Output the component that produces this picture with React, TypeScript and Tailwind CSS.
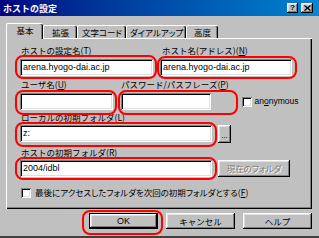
import type { ReactNode } from 'react';

const raised =
  'shadow-[inset_-1px_-1px_0_#000,inset_1px_1px_0_#fff,inset_-2px_-2px_0_#808080,inset_2px_2px_0_#dfdfdf]';
const sunken =
  'shadow-[inset_1px_1px_0_#808080,inset_-1px_-1px_0_#fff,inset_2px_2px_0_#000,inset_-2px_-2px_0_#dfdfdf]';

function U({ children }: { children: ReactNode }) {
  return <span className="underline underline-offset-[1px]">{children}</span>;
}

// red annotation ring drawn over a control
function Mark({ className }: { className: string }) {
  return <span className={`pointer-events-none absolute rounded-[8px] border-2 border-[#f00] ${className}`} />;
}

function Input({ width, value }: { width: string; value?: string }) {
  return (
    <div
      className={`${width} h-[17px] bg-white ${sunken} flex items-center px-[3px] font-['Liberation_Sans',sans-serif] text-[9px] leading-none`}
    >
      {value}
    </div>
  );
}

function Check() {
  return <div className={`w-[10px] h-[10px] bg-white ${sunken}`} />;
}

function Tab({ children, width, active }: { children: ReactNode; width: string; active?: boolean }) {
  if (active) {
    return (
      <div
        className={`relative z-10 -mb-px h-[16px] ${width} bg-[#c0c0c0] rounded-t-[2px] border-l border-t border-white shadow-[inset_-1px_0_0_#000,inset_-2px_0_0_#808080] flex items-center justify-center pb-[2px]`}
      >
        {children}
      </div>
    );
  }
  return (
    <div
      className={`h-[13px] ${width} rounded-t-[2px] border-l border-t border-white shadow-[inset_-1px_0_0_#000,inset_-2px_0_0_#808080] flex items-center justify-center [font-feature-settings:'palt']`}
    >
      {children}
    </div>
  );
}

export default function App() {
  return (
    <div className="w-[319px] h-[238px] overflow-hidden bg-[#c0c0c0] border-b-2 border-b-[#404040] flex flex-col font-['Noto_Sans_CJK_JP',sans-serif] text-[8.5px] leading-[11px] text-black">
      {/* title bar */}
      <div className="h-[16px] shrink-0 flex items-center justify-between pl-[3px] pr-[6px] bg-linear-to-r from-[#000080] to-[#1084d0]">
        <span className="text-white font-bold text-[9px]">ホストの設定</span>
        <div className="flex gap-[3px]">
          <div className={`w-[11px] h-[10px] bg-[#c0c0c0] ${raised} flex items-center justify-center font-['Liberation_Sans',sans-serif] font-bold text-[8px] leading-none`}>
            ?
          </div>
          <div className={`w-[12px] h-[10px] bg-[#c0c0c0] ${raised} flex items-center justify-center`}>
            <svg width="7" height="6" viewBox="0 0 7 6">
              <path d="M0.5 0.5L6.5 5.5M6.5 0.5L0.5 5.5" stroke="#000" strokeWidth="1.4" />
            </svg>
          </div>
        </div>
      </div>

      {/* tabs */}
      <div className="mt-[7px] h-[15px] shrink-0 flex items-end pl-[6px]">
        <Tab width="w-[37px]" active>
          基本
        </Tab>
        <Tab width="w-[34px]">拡張</Tab>
        <Tab width="w-[49px]">文字コード</Tab>
        <Tab width="w-[60px]">ダイアルアップ</Tab>
        <Tab width="w-[32px]">高度</Tab>
      </div>

      {/* tab page */}
      <div className="ml-[6px] w-[306px] h-[171px] shrink-0 border-t border-l border-white shadow-[inset_-1px_-1px_0_#000,inset_-2px_-2px_0_#808080] pl-[13px] pt-[6px] flex flex-col">
        <div className="flex gap-[7px]">
          <div className="flex flex-col">
            <span className="pl-[1px] h-[11px]">
              ホストの設定名(<U>T</U>)
            </span>
            <div className="relative mt-[3px]">
              <Input width="w-[133px]" value="arena.hyogo-dai.ac.jp" />
              <Mark className="-left-[5px] -right-[4px] -top-[4px] -bottom-[3px]" />
            </div>
          </div>
          <div className="flex flex-col">
            <span className="pl-[2px] h-[11px]">
              ホスト名(アドレス)(<U>N</U>)
            </span>
            <div className="relative mt-[3px]">
              <Input width="w-[132px]" value="arena.hyogo-dai.ac.jp" />
              <Mark className="-left-[3px] -right-[5px] -top-[3px] -bottom-[3px]" />
            </div>
          </div>
        </div>

        <div className="mt-[3px] flex">
          <div className="flex flex-col">
            <span className="pl-[1px] h-[11px]">
              ユーザ名(<U>U</U>)
            </span>
            <div className="relative mt-[3px]">
              <Input width="w-[93px]" />
              <Mark className="-left-[5px] -right-[4px] -top-[3px] -bottom-[5px]" />
            </div>
          </div>
          <div className="ml-[8px] flex flex-col">
            <span className="h-[11px]">
              パスワード/パスフレーズ(<U>P</U>)
            </span>
            <div className="relative mt-[3px]">
              <Input width="w-[90px]" />
              <Mark className="-left-[3px] -right-[9px] -top-[3px] -bottom-[5px]" />
            </div>
          </div>
          <div className="ml-[13px] mt-[14px] h-[17px] flex items-center gap-[3px]">
            <Check />
            <span className="font-['Liberation_Sans',sans-serif] text-[8.5px]">
              an<U>o</U>nymous
            </span>
          </div>
        </div>

        <span className="mt-[2px] pl-[1px] h-[11px]">
          ローカルの初期フォルダ(<U>L</U>)
        </span>
        <div className="mt-[2px] flex gap-[6px]">
          <div className="relative">
            <Input width="w-[192px]" value="z:" />
            <Mark className="-left-[5px] -right-[5px] -top-[3px] -bottom-[4px]" />
          </div>
          <div className={`w-[13px] h-[18px] ${raised} flex items-end justify-center pb-[4px] leading-none text-[7px]`}>
            ...
          </div>
        </div>

        <span className="mt-[4px] pl-[1px] h-[11px]">
          ホストの初期フォルダ(<U>R</U>)
        </span>
        <div className="mt-[2px] flex gap-[6px]">
          <div className="relative">
            <Input width="w-[192px]" value="2004/idbl" />
            <Mark className="-left-[5px] -right-[5px] -top-[3px] -bottom-[3px]" />
          </div>
          <div
            className={`w-[72px] h-[17px] ${raised} flex items-center justify-center text-[#808080] [text-shadow:1px_1px_0_#fff] [font-feature-settings:'palt']`}
          >
            現在のフォルダ
          </div>
        </div>

        <div className="mt-[10px] pl-[1px] flex items-center gap-[4px]">
          <Check />
          <span className="[font-feature-settings:'palt']">
            最後にアクセスしたフォルダを次回の初期フォルダとする(<U>F</U>)
          </span>
        </div>
      </div>

      {/* dialog buttons */}
      <div className="mt-[4px] flex justify-end gap-[8px] pr-[7px]">
        <div className="relative">
          <div
            className="w-[69px] h-[16px] flex items-center justify-center font-['Liberation_Sans',sans-serif] text-[9px] shadow-[inset_0_0_0_1px_#000,inset_-2px_-2px_0_#000,inset_2px_2px_0_#fff,inset_-3px_-3px_0_#808080,inset_3px_3px_0_#dfdfdf]"
          >
            OK
          </div>
          <Mark className="-left-[7px] -right-[5px] -top-[3px] -bottom-[6px]" />
        </div>
        <div className={`w-[69px] h-[16px] ${raised} flex items-center justify-center`}>キャンセル</div>
        <div className={`w-[69px] h-[16px] ${raised} flex items-center justify-center`}>ヘルプ</div>
      </div>
    </div>
  );
}
